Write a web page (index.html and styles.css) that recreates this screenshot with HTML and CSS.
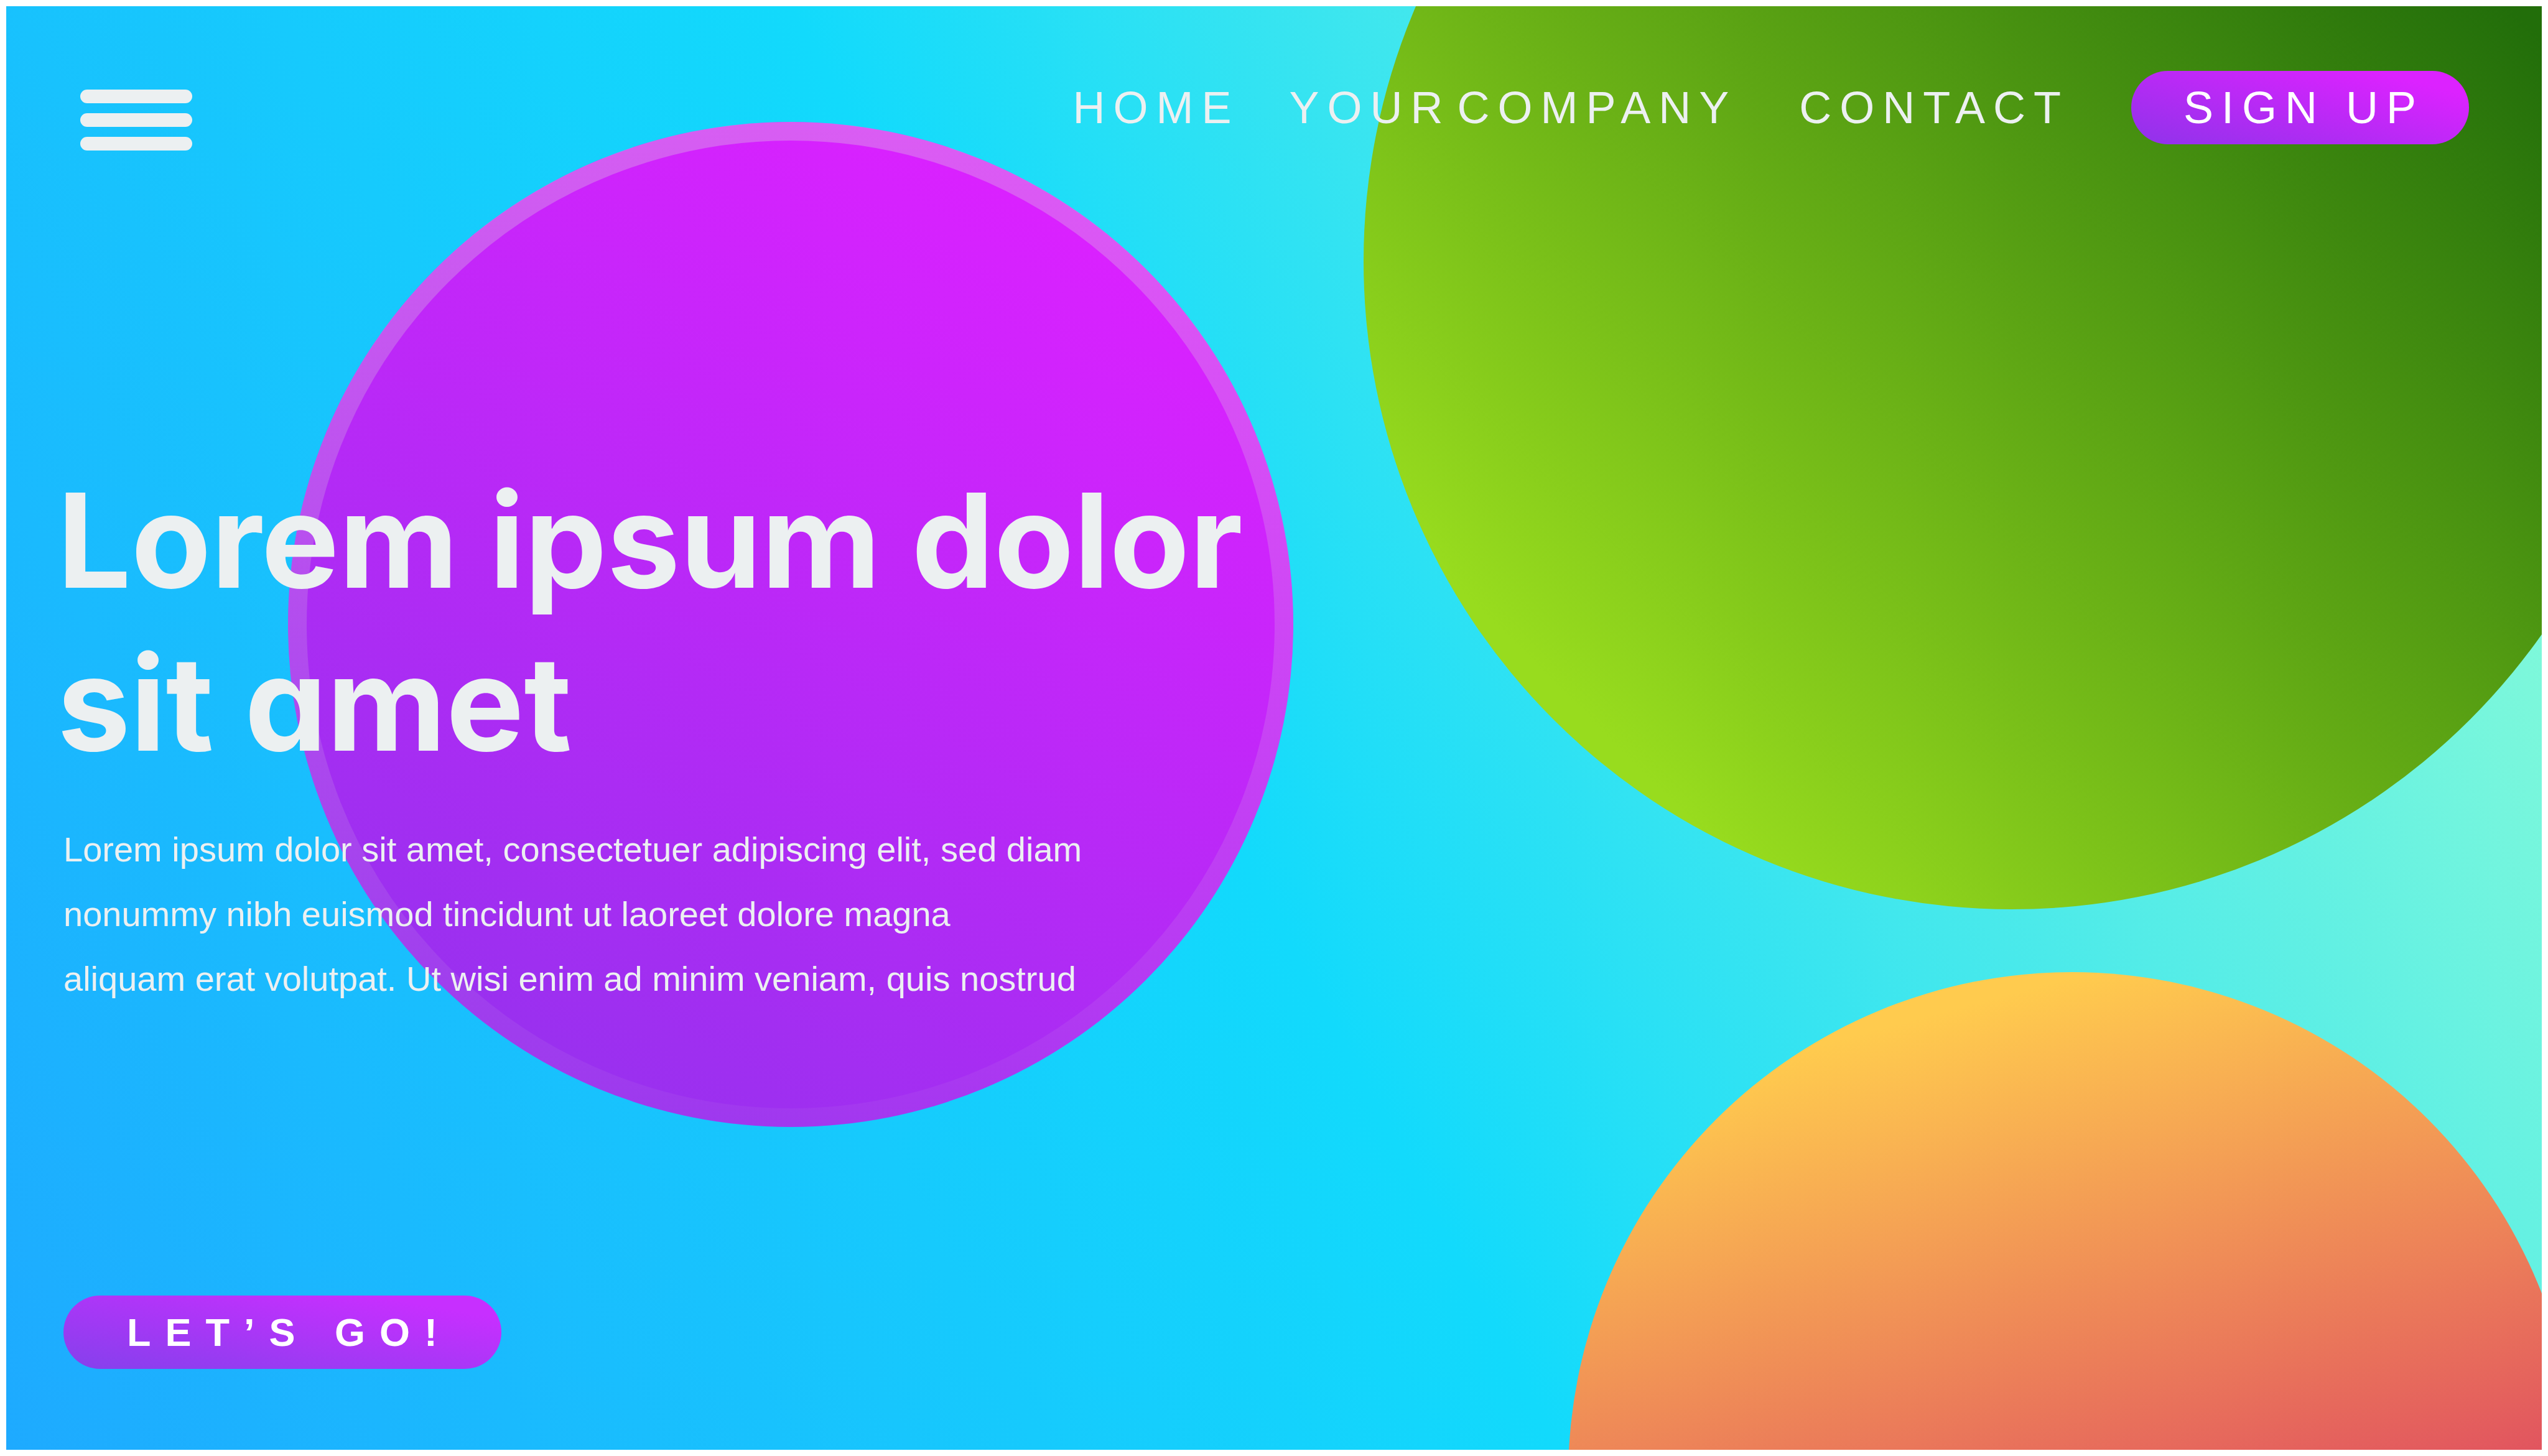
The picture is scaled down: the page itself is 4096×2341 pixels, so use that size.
FILE: index.html
```html
<!DOCTYPE html>
<html lang="en">
<head>
<meta charset="utf-8">
<meta name="viewport" content="width=device-width, initial-scale=1">
<title>Your Company</title>
<link rel="stylesheet" href="styles.css">
</head>
<body>
<div class="hero">
  <svg class="hero-art" viewBox="10 10 4076 2321" preserveAspectRatio="xMidYMid slice" aria-hidden="true">
    <defs>
      <linearGradient id="green" gradientUnits="userSpaceOnUse" x1="2192" y1="1461" x2="4276" y2="-623">
        <stop offset="16%" stop-color="#98dc1e"/>
        <stop offset="79%" stop-color="#226e0a"/>
      </linearGradient>
      <linearGradient id="orange" gradientUnits="userSpaceOnUse" x1="3070" y1="1414" x2="3586" y2="3338">
        <stop offset="11%" stop-color="#ffcb4e"/>
        <stop offset="58%" stop-color="#e1545f"/>
      </linearGradient>
      <linearGradient id="purple" gradientUnits="userSpaceOnUse" x1="882" y1="1678" x2="1662" y2="330">
        <stop offset="0%" stop-color="#9a30ef"/>
        <stop offset="100%" stop-color="#da21ff"/>
      </linearGradient>
      <linearGradient id="sheen" gradientUnits="userSpaceOnUse" x1="1272" y1="196" x2="1272" y2="1812">
        <stop offset="0%" stop-color="#dcdcda" stop-opacity="0.32"/>
        <stop offset="100%" stop-color="#dcdcda" stop-opacity="0.05"/>
      </linearGradient>
    </defs>
    <circle cx="1271" cy="1004" r="808" fill="url(#purple)"/>
    <circle cx="1271" cy="1004" r="793" fill="none" stroke="url(#sheen)" stroke-width="30"/>
    <circle cx="3234" cy="420" r="1042" fill="url(#green)"/>
    <circle cx="3331" cy="2373" r="810" fill="url(#orange)"/>
  </svg>

  <header class="topbar">
    <button class="menu" type="button" aria-label="Menu">
      <span class="menu-bar"></span>
      <span class="menu-bar"></span>
      <span class="menu-bar"></span>
    </button>
    <nav class="nav">
      <a class="nav-link" href="#home">HOME</a>
      <a class="nav-link nav-company" href="#company"><span>YOUR</span> <span>COMPANY</span></a>
      <a class="nav-link" href="#contact">CONTACT</a>
      <button class="pill signup" type="button">SIGN UP</button>
    </nav>
  </header>

  <main class="content">
    <h1 class="title">Lorem ipsum dolor<br>sit amet</h1>
    <p class="lead">Lorem ipsum dolor sit amet, consectetuer adipiscing elit, sed diam<br>nonummy nibh euismod tincidunt ut laoreet dolore magna<br>aliquam erat volutpat. Ut wisi enim ad minim veniam, quis nostrud</p>
    <button class="pill cta" type="button">LET’S GO!</button>
  </main>
</div>
</body>
</html>
```
FILE: styles.css
```css
* {
  box-sizing: border-box;
}

body {
  margin: 0;
  padding: 10px;
  background: #fff;
  color: #ecf0f1;
  font-family: "Liberation Sans", Arial, sans-serif;
}

.hero {
  position: relative;
  display: flex;
  flex-direction: column;
  min-height: calc(100vh - 20px);
  overflow: hidden;
  background: linear-gradient(62deg, #1eaaff 0%, #12dafc 47%, #98ffd2 100%);
}

/* Decorative circles behind the content */
.hero-art {
  position: absolute;
  inset: 0;
  width: 100%;
  height: 100%;
}

.topbar {
  position: relative;
  display: flex;
  justify-content: space-between;
  align-items: flex-start;
  padding: 104px 117px 0 119px;
}

.menu {
  display: flex;
  flex-direction: column;
  gap: 16px;
  padding: 30px 0 0;
  border: 0;
  background: none;
}

.menu-bar {
  width: 180px;
  height: 22px;
  border-radius: 11px;
  background: #ecf0f1;
}

.nav {
  display: flex;
  align-items: center;
  gap: 100px;
}

.nav-link {
  color: #ecf0f1;
  font-size: 72px;
  letter-spacing: 13px;
  text-decoration: none;
  white-space: nowrap;
}

.nav-company {
  display: flex;
  gap: 10px;
  margin-left: -20px;
}

.pill {
  height: 118px;
  padding: 0;
  border: 0;
  border-radius: 59px;
  color: #fff;
  font-family: inherit;
  white-space: nowrap;
}

.signup {
  padding: 0 72px 0 84px;
  background: linear-gradient(15deg, #8f33ea 0%, #dc22ff 85%);
  font-size: 72px;
  letter-spacing: 13px;
}

.content {
  position: relative;
  display: flex;
  flex: 1;
  flex-direction: column;
  align-items: flex-start;
  padding: 496px 92px 130px;
}

.title {
  margin: 0 0 0 -10px;
  font-family: Inter, "Open Sans", sans-serif;
  font-size: 210px;
  font-weight: 700;
  line-height: 262px;
  font-feature-settings: "cv11";
}

.lead {
  margin: 52px 0 0;
  font-size: 56px;
  line-height: 104px;
}

.cta {
  margin-top: auto;
  padding: 0 80px 0 102px;
  background: linear-gradient(10deg, #8540ec 0%, #c72fff 85%);
  font-size: 63px;
  font-weight: 700;
  letter-spacing: 23px;
}
```
